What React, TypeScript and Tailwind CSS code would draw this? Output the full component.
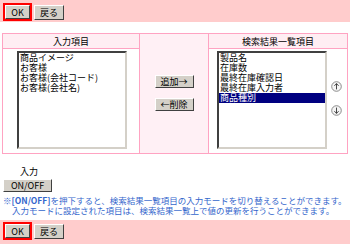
import React from "react";

const btn =
  "bg-[#d4d0c8] border border-t-white border-l-white border-r-[#404040] border-b-[#404040] text-black text-[9px] leading-none flex items-center justify-center";

function CircleArrow({ up }: { up: boolean }) {
  return (
    <svg width="11" height="11" viewBox="0 0 11 11">
      <circle cx="5.5" cy="5.5" r="4.8" fill="#f4f4f4" stroke="#808080" strokeWidth="0.9" />
      {up ? (
        <path d="M5.5 2.6 V8.4 M3.4 4.8 L5.5 2.6 L7.6 4.8" fill="none" stroke="#333" strokeWidth="0.9" />
      ) : (
        <path d="M5.5 2.6 V8.4 M3.4 6.2 L5.5 8.4 L7.6 6.2" fill="none" stroke="#333" strokeWidth="0.9" />
      )}
    </svg>
  );
}

function ListBox({ items, selected }: { items: string[]; selected?: number }) {
  return (
    <div className="w-[110px] h-[98px] bg-white border-2 border-t-[#404040] border-l-[#404040] border-r-[#d4d0c8] border-b-[#d4d0c8] overflow-hidden">
      {items.map((it, i) => (
        <div
          key={i}
          className={
            "h-[10px] leading-[10px] text-[9px] whitespace-nowrap pl-[1px] " +
            (i === selected ? "bg-[#000080] text-white" : "text-black")
          }
        >
          {it}
        </div>
      ))}
    </div>
  );
}

function Bar() {
  return (
    <div className="flex items-center gap-[2px] pl-[3px]">
      <div className="border-2 border-[#ff0000] w-[29px] h-[18px] flex">
        <div className={btn + " w-full h-full"}>OK</div>
      </div>
      <div className={btn + " w-[30px] h-[15px]"}>戻る</div>
    </div>
  );
}

export default function App() {
  return (
    <div
      className="w-[350px] h-[244px] bg-white relative overflow-hidden"
      style={{ fontFamily: '"Noto Sans CJK JP", "Noto Sans", sans-serif' }}
    >
      <div className="h-[22px] bg-[#ffcccc] pt-[3px]">
        <Bar />
      </div>

      <div className="mt-[11px] ml-[2px] w-[346px] h-[121px] border border-[#ffa3c2] flex">
        <div className="w-[136px] flex flex-col">
          <div className="h-[15px] bg-[#ffeef3] border-b border-[#ffa3c2] text-[9px] leading-[15px] text-center text-black">
            入力項目
          </div>
          <div className="pl-[14px] pt-[2px]">
            <ListBox items={["商品イメージ", "お客様", "お客様(会社コード)", "お客様(会社名)"]} />
          </div>
        </div>
        <div className="w-[70px] bg-[#fff0f5] border-l border-r border-[#ffa3c2] flex flex-col items-center pt-[41px] gap-[10px]">
          <div className={btn + " w-[39px] h-[13px]"}>追加→</div>
          <div className={btn + " w-[39px] h-[13px]"}>←削除</div>
        </div>
        <div className="flex-1 flex flex-col">
          <div className="h-[15px] bg-[#ffeef3] border-b border-[#ffa3c2] text-[9px] leading-[15px] text-center text-black">
            検索結果一覧項目
          </div>
          <div className="pl-[8px] pt-[2px] flex">
            <ListBox
              items={["製品名", "在庫数", "最終在庫確認日", "最終在庫入力者", "商品種別"]}
              selected={4}
            />
            <div className="flex flex-col pl-[4px] pt-[30px] gap-[13px]">
              <CircleArrow up />
              <CircleArrow up={false} />
            </div>
          </div>
        </div>
      </div>

      <div className="mt-[12px] pl-[20px] text-[9px] leading-[12px] text-black">入力</div>
      <div className="pl-[3px] mt-[1px]">
        <div className={btn + " w-[49px] h-[13px]"}>ON/OFF</div>
      </div>
      <div className="mt-[3px] pl-[3px] text-[8.5px] leading-[10px] text-[#3366cc] whitespace-nowrap">
        <div>
          ※<span className="font-bold">[ON/OFF]</span>を押下すると、検索結果一覧項目の入力モードを切り替えることができます。
        </div>
        <div className="pl-[9px]">入力モードに設定された項目は、検索結果一覧上で値の更新を行うことができます。</div>
      </div>
      <div className="absolute left-0 right-0 top-[220px] bottom-0 bg-[#ffcccc] pt-[2px]">
        <Bar />
      </div>
    </div>
  );
}
